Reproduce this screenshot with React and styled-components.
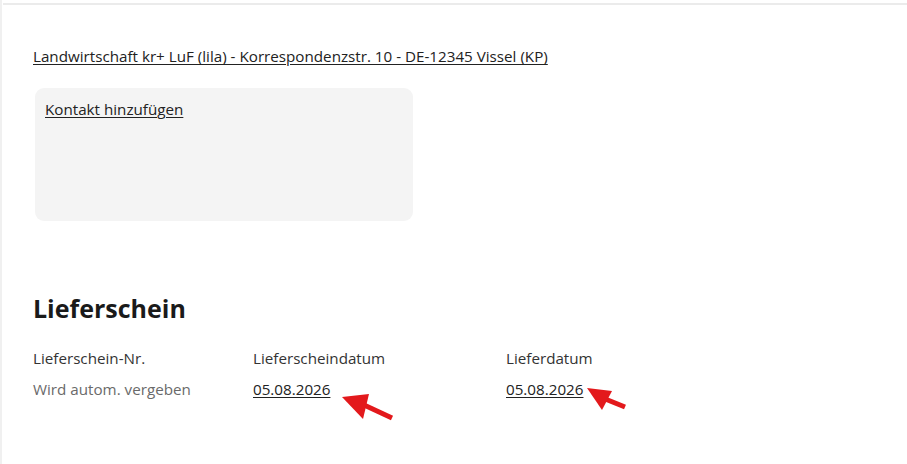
import React from "react";
import styled, { createGlobalStyle } from "styled-components";

const Global = createGlobalStyle`
  html, body { margin: 0; padding: 0; background: #fff; }
  body { font-family: "Open Sans", "Noto Sans", sans-serif; color: #222; }
`;

const Page = styled.div`
  display: flex;
  min-height: 464px;
  width: 907px;
  overflow: hidden;
`;

const SideStrip = styled.div`
  width: 2px;
  background: #f0f0f0;
  flex: none;
`;

const Main = styled.div`
  flex: 1;
  padding-top: 3px;
  padding-left: 1px;
`;

const Content = styled.div`
  border-top: 2px solid #ebebeb;
  padding: 41px 0 0 30px;
`;

const Link = styled.a`
  color: ${(p) => p.$color || "#222"};
  text-decoration: underline;
  text-underline-offset: 2px;
  text-decoration-thickness: 1px;
  font-size: 15.2px;
  line-height: 20px;
  cursor: pointer;
`;

const AddressRow = styled.div`
  height: 20px;
  line-height: 20px;
`;

const Card = styled.div`
  margin-top: 22px;
  margin-left: 2px;
  width: 378px;
  height: 133px;
  box-sizing: border-box;
  background: #f4f4f4;
  border-radius: 9px;
  padding: 11px 10px;
  line-height: 20px;
`;

const Heading = styled.h2`
  margin: 71px 0 0 0;
  font-size: 25px;
  line-height: 32px;
  font-weight: 700;
  color: #1a1a1a;
`;

const Fields = styled.div`
  display: grid;
  grid-template-columns: 220px 253px 1fr;
  margin-top: 24px;
`;

const Field = styled.div`
  display: flex;
  flex-direction: column;
  gap: 11px;
`;

const Label = styled.div`
  font-size: 15.2px;
  line-height: 20px;
  color: #333;
`;

const Value = styled.div`
  font-size: 15.2px;
  line-height: 20px;
  color: ${(p) => (p.$muted ? "#6a6a6a" : "#222")};
`;

const ValueWrap = styled.div`
  position: relative;
  align-self: flex-start;
`;

const Arrow = styled.svg`
  position: absolute;
  left: ${(p) => p.$left}px;
  top: ${(p) => p.$top}px;
  overflow: visible;
`;

function RedArrow({ left, top, head, end }) {
  const [ax, ay, bx, by] = head;
  const [ex, ey] = end;
  const mx = (ax + bx) / 2;
  const my = (ay + by) / 2;
  return (
    <Arrow $left={left} $top={top} width={ex} height={ey} viewBox={`0 0 ${ex} ${ey}`}>
      <line x1={ex} y1={ey} x2={mx - 3} y2={my - 2} stroke="#e3191c" strokeWidth="5" />
      <polygon points={`0,0 ${ax},${ay} ${bx},${by}`} fill="#e3191c" />
    </Arrow>
  );
}

export default function App() {
  return (
    <>
      <Global />
      <Page>
        <SideStrip />
        <Main>
          <Content>
            <AddressRow>
              <Link>Landwirtschaft kr+ LuF (lila) - Korrespondenzstr. 10 - DE-12345 Vissel (KP)</Link>
            </AddressRow>
            <Card>
              <Link>Kontakt hinzufügen</Link>
            </Card>
            <Heading>Lieferschein</Heading>
            <Fields>
              <Field>
                <Label>Lieferschein-Nr.</Label>
                <Value $muted>Wird autom. vergeben</Value>
              </Field>
              <Field>
                <Label>Lieferscheindatum</Label>
                <ValueWrap>
                  <Value><Link>05.08.2026</Link></Value>
                  <RedArrow left={89} top={18} head={[27, -3, 21, 22]} end={[50, 21]} />
                </ValueWrap>
              </Field>
              <Field>
                <Label>Lieferdatum</Label>
                <ValueWrap>
                  <Value><Link>05.08.2026</Link></Value>
                  <RedArrow left={81} top={9} head={[25, 3, 15, 22]} end={[38, 19]} />
                </ValueWrap>
              </Field>
            </Fields>
          </Content>
        </Main>
      </Page>
    </>
  );
}
